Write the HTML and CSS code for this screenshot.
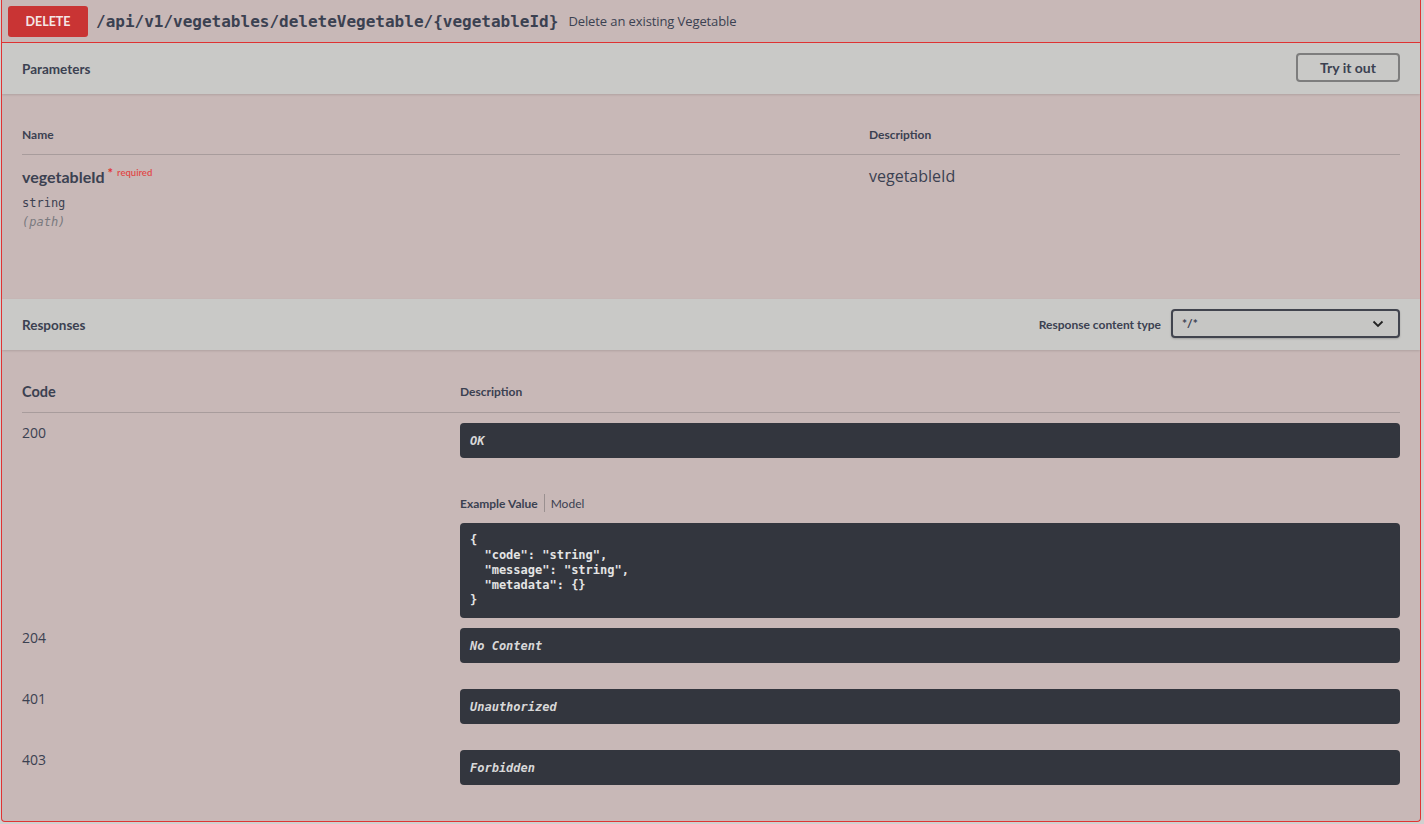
FILE: index.html
```html
<!DOCTYPE html>
<html>
<head>
<meta charset="utf-8">
<link rel="stylesheet" href="styles.css">
</head>
<body>
<div class="opblock">
  <div class="summary">
    <span class="method">DELETE</span>
    <span class="path">/api/v1/vegetables/deleteVegetable/{vegetableId}</span>
    <span class="summary-desc">Delete an existing Vegetable</span>
  </div>

  <div class="section-header">
    <h4 class="section-title">Parameters</h4>
    <button class="try-btn">Try it out</button>
  </div>
  <div class="params">
    <div class="params-head">
      <div class="col-h">Name</div>
      <div class="col-h">Description</div>
    </div>
    <div class="params-row">
      <div class="param-name-cell">
        <div class="param-name">vegetableId<span class="req-star">*</span><span class="req">required</span></div>
        <div class="param-type">string</div>
        <div class="param-in">(path)</div>
      </div>
      <div class="param-desc">vegetableId</div>
    </div>
  </div>

  <div class="section-header">
    <h4 class="section-title">Responses</h4>
    <div class="ctype">
      <span class="ctype-label">Response content type</span>
      <div class="select">
        <span>*/*</span>
        <svg width="12" height="8" viewBox="0 0 12 8"><path d="M1.5 1.5 L6 6 L10.5 1.5" fill="none" stroke="#222" stroke-width="1.8"/></svg>
      </div>
    </div>
  </div>
  <div class="responses">
    <div class="resp-head">
      <div class="code-h">Code</div>
      <div class="col-h">Description</div>
    </div>
    <div class="resp-row first">
      <div class="code">200</div>
      <div class="resp-desc">
        <div class="dark-box">OK</div>
        <div class="tabs"><span class="tab active">Example Value</span><span class="tab-sep"></span><span class="tab">Model</span></div>
        <pre class="example">{
  "code": "string",
  "message": "string",
  "metadata": {}
}</pre>
      </div>
    </div>
    <div class="resp-row">
      <div class="code">204</div>
      <div class="resp-desc"><div class="dark-box">No Content</div></div>
    </div>
    <div class="resp-row">
      <div class="code">401</div>
      <div class="resp-desc"><div class="dark-box">Unauthorized</div></div>
    </div>
    <div class="resp-row">
      <div class="code">403</div>
      <div class="resp-desc"><div class="dark-box">Forbidden</div></div>
    </div>
  </div>
</div>
</body>
</html>
```
FILE: styles.css
```css
html, body {
  margin: 0;
  padding: 0;
  background: #d0d0d0;
  height: 824px;
  overflow: hidden;
}
body {
  font-family: "Open Sans", "Noto Sans", sans-serif;
  color: #3b4151;
}
.opblock {
  margin: 0 3px 0 1px;
  height: 822px;
  box-sizing: border-box;
  background: #c8b8b7;
  border: 1px solid #e03333;
  border-top: none;
  border-radius: 0 0 4px 4px;
  overflow: hidden;
}
.summary {
  box-sizing: border-box;
  border-bottom: 1px solid #e03333;
  display: flex;
  align-items: center;
  padding: 0 6px 0 6px;
  height: 43px;
}
.method {
  width: 80px;
  height: 31px;
  background: #c93434;
  color: #f4e6e6;
  border-radius: 3px;
  font-family: Lato, sans-serif;
  font-weight: 700;
  font-size: 12.5px;
  display: flex;
  align-items: center;
  justify-content: center;
}
.path {
  font-family: "DejaVu Sans Mono", monospace;
  font-weight: 700;
  font-size: 16px;
  margin-left: 8px;
  color: #3b4151;
}
.summary-desc {
  font-size: 13px;
  margin-left: 10px;
  letter-spacing: -0.1px;
  color: #3b4151;
}
.section-header {
  height: 51px;
  background: #c9c9c7;
  box-shadow: 0 1px 2px rgba(0,0,0,0.12);
  display: flex;
  align-items: center;
  justify-content: space-between;
  padding: 0 20px 0 20px;
  position: relative;
}
.section-title {
  margin: 0;
  font-family: Lato, sans-serif;
  font-weight: 700;
  font-size: 13.5px;
  color: #3b4151;
}
.try-btn {
  width: 104px;
  height: 29px;
  border: 2px solid #7d7d7d;
  border-radius: 4px;
  background: transparent;
  font-family: Lato, sans-serif;
  font-weight: 700;
  font-size: 14px;
  color: #3b4151;
  padding: 0;
  margin-top: -2px;
}
.params {
  height: 205px;
  box-sizing: border-box;
  padding: 20px 20px 0 20px;
}
.params-head {
  display: grid;
  grid-template-columns: 847px 1fr;
  height: 40px;
  align-items: center;
  border-bottom: 1px solid #a89c9c;
}
.col-h {
  font-family: Lato, sans-serif;
  font-weight: 700;
  font-size: 12px;
  color: #3b4151;
}
.params-row {
  display: grid;
  grid-template-columns: 847px 1fr;
  padding-top: 12px;
}
.param-name {
  font-family: Lato, sans-serif;
  font-weight: 700;
  font-size: 16px;
  line-height: 20px;
  height: 20px;
}
.req-star {
  color: #e03333;
  font-size: 13px;
  position: relative;
  top: -5px;
  margin-left: 3px;
}
.req {
  color: #e04848;
  font-size: 9.5px;
  position: relative;
  top: -7px;
  margin-left: 4px;
  font-weight: 600;
}
.param-type {
  font-family: "DejaVu Sans Mono", monospace;
  font-size: 12px;
  line-height: 16px;
  margin-top: 8px;
}
.param-in {
  font-family: "DejaVu Sans Mono", monospace;
  font-style: italic;
  font-size: 12px;
  line-height: 16px;
  margin-top: 3px;
  color: #7a7a7f;
}
.param-desc {
  font-size: 16px;
  line-height: 20px;
  margin-top: -1px;
}
.ctype {
  display: flex;
  align-items: center;
}
.ctype-label {
  font-family: Lato, sans-serif;
  font-weight: 700;
  font-size: 12px;
  margin-right: 10px;
}
.select {
  width: 229px;
  height: 29px;
  box-sizing: border-box;
  border: 2px solid #41444e;
  border-radius: 4px;
  background: #c6c6c4;
  display: flex;
  align-items: center;
  justify-content: space-between;
  padding: 0 14px 0 9px;
  font-family: Lato, sans-serif;
  font-weight: 700;
  font-size: 12px;
  box-shadow: 0 1px 2px rgba(0,0,0,0.2);
  margin-top: -2px;
}
.responses {
  padding: 20px 20px 0 20px;
}
.resp-head {
  display: grid;
  grid-template-columns: 438px 1fr;
  height: 42px;
  align-items: center;
  border-bottom: 1px solid #a89c9c;
}
.code-h {
  font-family: Lato, sans-serif;
  font-weight: 700;
  font-size: 14.5px;
  padding-top: 1px;
}
.resp-row {
  display: grid;
  grid-template-columns: 438px 1fr;
  padding: 10px 0 16px;
}
.resp-row.first {
  padding-bottom: 0;
}
.code {
  font-size: 14px;
  line-height: 20px;
}
.dark-box {
  height: 35px;
  box-sizing: border-box;
  background: #33363e;
  border-radius: 4px;
  padding: 0 10px;
  display: flex;
  align-items: center;
  font-family: "DejaVu Sans Mono", monospace;
  font-style: italic;
  font-weight: 700;
  font-size: 12px;
  color: #d8d8d8;
}
.tabs {
  display: flex;
  align-items: center;
  height: 30px;
  margin-top: 30px;
  font-family: Lato, sans-serif;
  font-size: 12px;
}
.tab.active {
  font-weight: 700;
}
.tab-sep {
  width: 1px;
  height: 18px;
  background: #9a9090;
  margin: 0 6px 0 6px;
}
.example {
  margin: 5px 0 0 0;
  height: 95px;
  box-sizing: border-box;
  background: #33363e;
  border-radius: 4px;
  padding: 10px;
  font-family: "DejaVu Sans Mono", monospace;
  font-weight: 700;
  font-size: 12px;
  line-height: 15px;
  color: #e4e4e4;
}
```
